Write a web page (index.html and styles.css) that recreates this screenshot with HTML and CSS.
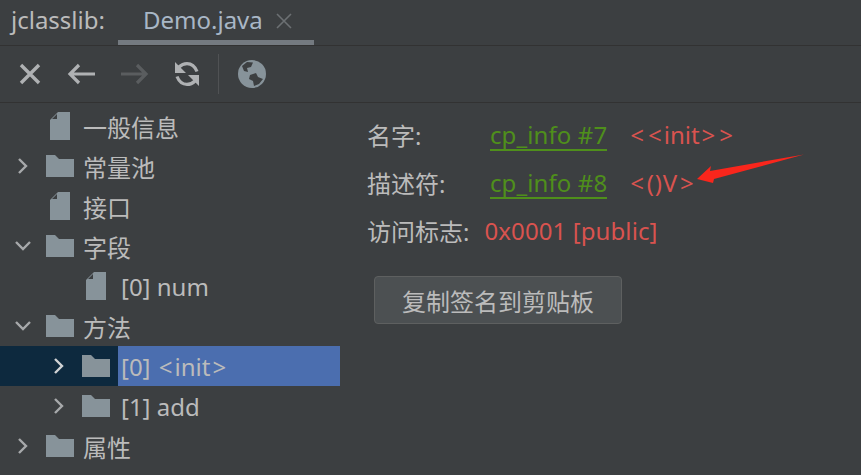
FILE: index.html
```html
<!DOCTYPE html>
<html lang="en">
<head>
    <meta charset="UTF-8">
    <title>jclasslib</title>
    <link rel="stylesheet" href="styles.css">
</head>
<body>
    <svg width="0" height="0" class="defs">
        <symbol id="folder" viewBox="0 0 28 22"><path d="M0 0H9L13 4H28V22H0Z"/></symbol>
        <symbol id="file" viewBox="0 0 20 28"><path d="M8 0H20V28H0V8ZM7 2L2 7H7Z" fill-rule="evenodd"/></symbol>
        <symbol id="right" viewBox="0 0 14 18"><path d="M3 2L10 9L3 16" fill="none" stroke-width="2.4"/></symbol>
        <symbol id="down" viewBox="0 0 18 14"><path d="M2 3L9 10L16 3" fill="none" stroke-width="2.4"/></symbol>
    </svg>

    <div class="tabbar">
        <span class="tabbar-title">jclasslib:</span>
        <div class="tab">
            <span>Demo.java</span>
            <svg class="tab-close" width="16" height="16" viewBox="0 0 16 16"><path d="M1 1L15 15M15 1L1 15"/></svg>
        </div>
    </div>

    <div class="toolbar">
        <svg class="tool" width="24" height="24" viewBox="0 0 24 24"><path class="stroke" d="M3 3L21 21M21 3L3 21" stroke-width="3.4"/></svg>
        <svg class="tool" width="30" height="24" viewBox="0 0 30 24"><path class="stroke" d="M29 12H4M13 3L4 12L13 21" stroke-width="3.2"/></svg>
        <svg class="tool tool-off" width="30" height="24" viewBox="0 0 30 24"><path class="stroke" d="M1 12H26M17 3L26 12L17 21" stroke-width="3.2"/></svg>
        <svg class="tool tool-sync" width="24" height="24" viewBox="0 0 24 24">
            <path class="stroke" d="M4 5C7 2 10 1.600 12 1.600C16 1.600 20 4.500 22 9.500M20 19C17 22 14 22.400 12 22.400C8 22.400 4 19.500 2 14.500" stroke-width="3.2"/>
            <path class="fill" d="M0 0V11H11ZM24 24V13H13Z"/>
        </svg>
        <div class="tool-sep"></div>
        <svg class="globe" width="28" height="28" viewBox="0 0 28 28">
            <circle cx="14" cy="14" r="14"/>
            <path d="M4 6L9 2L15 2.500L13 7L9 8L10 12L6 11ZM12 15L18 13L20 17L25 19L21 24L16 26L15 21L11 19Z" fill="#3c3f41"/>
        </svg>
    </div>

    <div class="main">
        <ul class="tree">
            <li class="row lvl0"><span class="arrow"></span><svg class="ic-file"><use href="#file"/></svg><span class="label">一般信息</span></li>
            <li class="row lvl0"><svg class="arrow"><use href="#right"/></svg><svg class="ic-folder"><use href="#folder"/></svg><span class="label">常量池</span></li>
            <li class="row lvl0"><span class="arrow"></span><svg class="ic-file"><use href="#file"/></svg><span class="label">接口</span></li>
            <li class="row lvl0"><svg class="arrow"><use href="#down"/></svg><svg class="ic-folder"><use href="#folder"/></svg><span class="label">字段</span></li>
            <li class="row lvl1"><span class="arrow"></span><svg class="ic-file"><use href="#file"/></svg><span class="label">[0] num</span></li>
            <li class="row lvl0"><svg class="arrow"><use href="#down"/></svg><svg class="ic-folder"><use href="#folder"/></svg><span class="label">方法</span></li>
            <li class="row lvl1 selected"><svg class="arrow"><use href="#right"/></svg><svg class="ic-folder"><use href="#folder"/></svg><span class="label">[0] <span class="br">&lt;</span>init<span class="br">&gt;</span></span></li>
            <li class="row lvl1"><svg class="arrow"><use href="#right"/></svg><svg class="ic-folder"><use href="#folder"/></svg><span class="label">[1] add</span></li>
            <li class="row lvl0"><svg class="arrow"><use href="#right"/></svg><svg class="ic-folder"><use href="#folder"/></svg><span class="label">属性</span></li>
        </ul>

        <div class="details">
            <div class="info-row">
                <span class="key">名字:</span>
                <a class="link" href="#">cp_info #7</a>
                <span class="val"><span class="br">&lt;</span><span class="br">&lt;</span>init<span class="br">&gt;</span><span class="br">&gt;</span></span>
            </div>
            <div class="info-row">
                <span class="key">描述符:</span>
                <a class="link" href="#">cp_info #8</a>
                <span class="val val-wide"><span class="br">&lt;</span>()V<span class="br">&gt;</span></span>
            </div>
            <div class="info-row">
                <span class="key-auto">访问标志:</span>
                <span class="val-flags">0x0001 [public]</span>
            </div>
            <button class="copy-btn">复制签名到剪贴板</button>
        </div>
    </div>

    <svg class="annot" width="120" height="40" viewBox="0 0 120 40"><path d="M1 28L15 15L14 20L108 3.500L18 28L17 32Z"/></svg>
</body>
</html>
```

FILE: styles.css
```css
html, body {
    height: 100%;
}

body {
    margin: 0;
    height: 475px;
    overflow: hidden;
    position: relative;
    background-color: #3c3f41;
    color: #bbbbbb;
    font-family: "Noto Sans", "Noto Sans CJK SC", sans-serif;
    font-size: 24px;
}

.defs {
    position: absolute;
}

.tabbar {
    display: flex;
    height: 45px;
    border-bottom: 1px solid #323232;
    box-sizing: content-box;
}

.tabbar-title {
    width: 118px;
    padding-left: 11px;
    box-sizing: border-box;
    line-height: 40px;
}

.tab {
    width: 196px;
    height: 45px;
    box-sizing: border-box;
    padding-left: 25px;
    display: flex;
    align-items: flex-start;
    gap: 13px;
    line-height: 40px;
    border-bottom: 5px solid #747a80;
    color: #a9b7c6;
}

.tab-close {
    margin-top: 13px;
    stroke: #6c7073;
    stroke-width: 1.6;
}

.toolbar {
    display: flex;
    align-items: center;
    height: 56px;
    padding-left: 18px;
    border-bottom: 1px solid #323232;
}

.tool {
    margin-right: 24px;
    fill: none;
}

.tool .stroke {
    fill: none;
    stroke: #afb1b3;
}

.tool .fill {
    fill: #afb1b3;
}

.tool-off .stroke {
    stroke: #5a5d5f;
}

.tool-sync {
    margin-left: 1px;
}

.tool-sep {
    width: 1px;
    height: 40px;
    margin-left: -5px;
    background-color: #505254;
}

.globe {
    margin-left: 19px;
    fill: #87939a;
}

.main {
    display: flex;
}

.tree {
    list-style: none;
    margin: 3px 0 0;
    padding: 0;
    width: 340px;
}

.row {
    height: 40px;
    display: flex;
    align-items: center;
}

.lvl0 {
    padding-left: 14px;
}

.lvl1 {
    padding-left: 50px;
}

.arrow {
    width: 18px;
    height: 18px;
    margin-right: 14px;
    stroke: #a7a9ab;
    fill: none;
    flex: none;
}

.ic-folder {
    width: 28px;
    height: 22px;
    margin-right: 9px;
    fill: #87939a;
    flex: none;
}

.ic-file {
    width: 20px;
    height: 28px;
    margin: 0 13px 0 4px;
    fill: #87939a;
    flex: none;
}

.lvl1 .label {
    margin-left: 2px;
}

.selected {
    background: linear-gradient(to right, #0d293e 118px, #4b6eaf 118px);
}

.selected .arrow {
    stroke: #d0d2d4;
}

.details {
    padding: 7px 0 0 27px;
}

.info-row {
    display: flex;
    height: 48px;
    align-items: center;
}

.key {
    width: 123px;
}

.key-auto {
    margin-right: 15px;
}

.link {
    color: #4f8f1b;
    text-decoration: none;
    border-bottom: 2px solid #4f8f1b;
    line-height: 28px;
    padding-top: 2px;
    margin: 2px 21px 0 0;
    letter-spacing: 0.1px;
}

.val,
.val-flags {
    color: #d9534f;
}

.val-wide {
    letter-spacing: 0.8px;
}

.val-flags {
    letter-spacing: 0.1px;
}

.br {
    padding: 0 2px;
}

.copy-btn {
    display: block;
    width: 248px;
    height: 48px;
    margin: 22px 0 0 7px;
    padding: 0;
    background-color: #4c5052;
    color: #bbbbbb;
    border: 1px solid #5e6060;
    border-radius: 4px;
    font-family: inherit;
    font-size: 24px;
}

.annot {
    position: absolute;
    left: 696px;
    top: 151px;
    fill: #f9261c;
}
```
